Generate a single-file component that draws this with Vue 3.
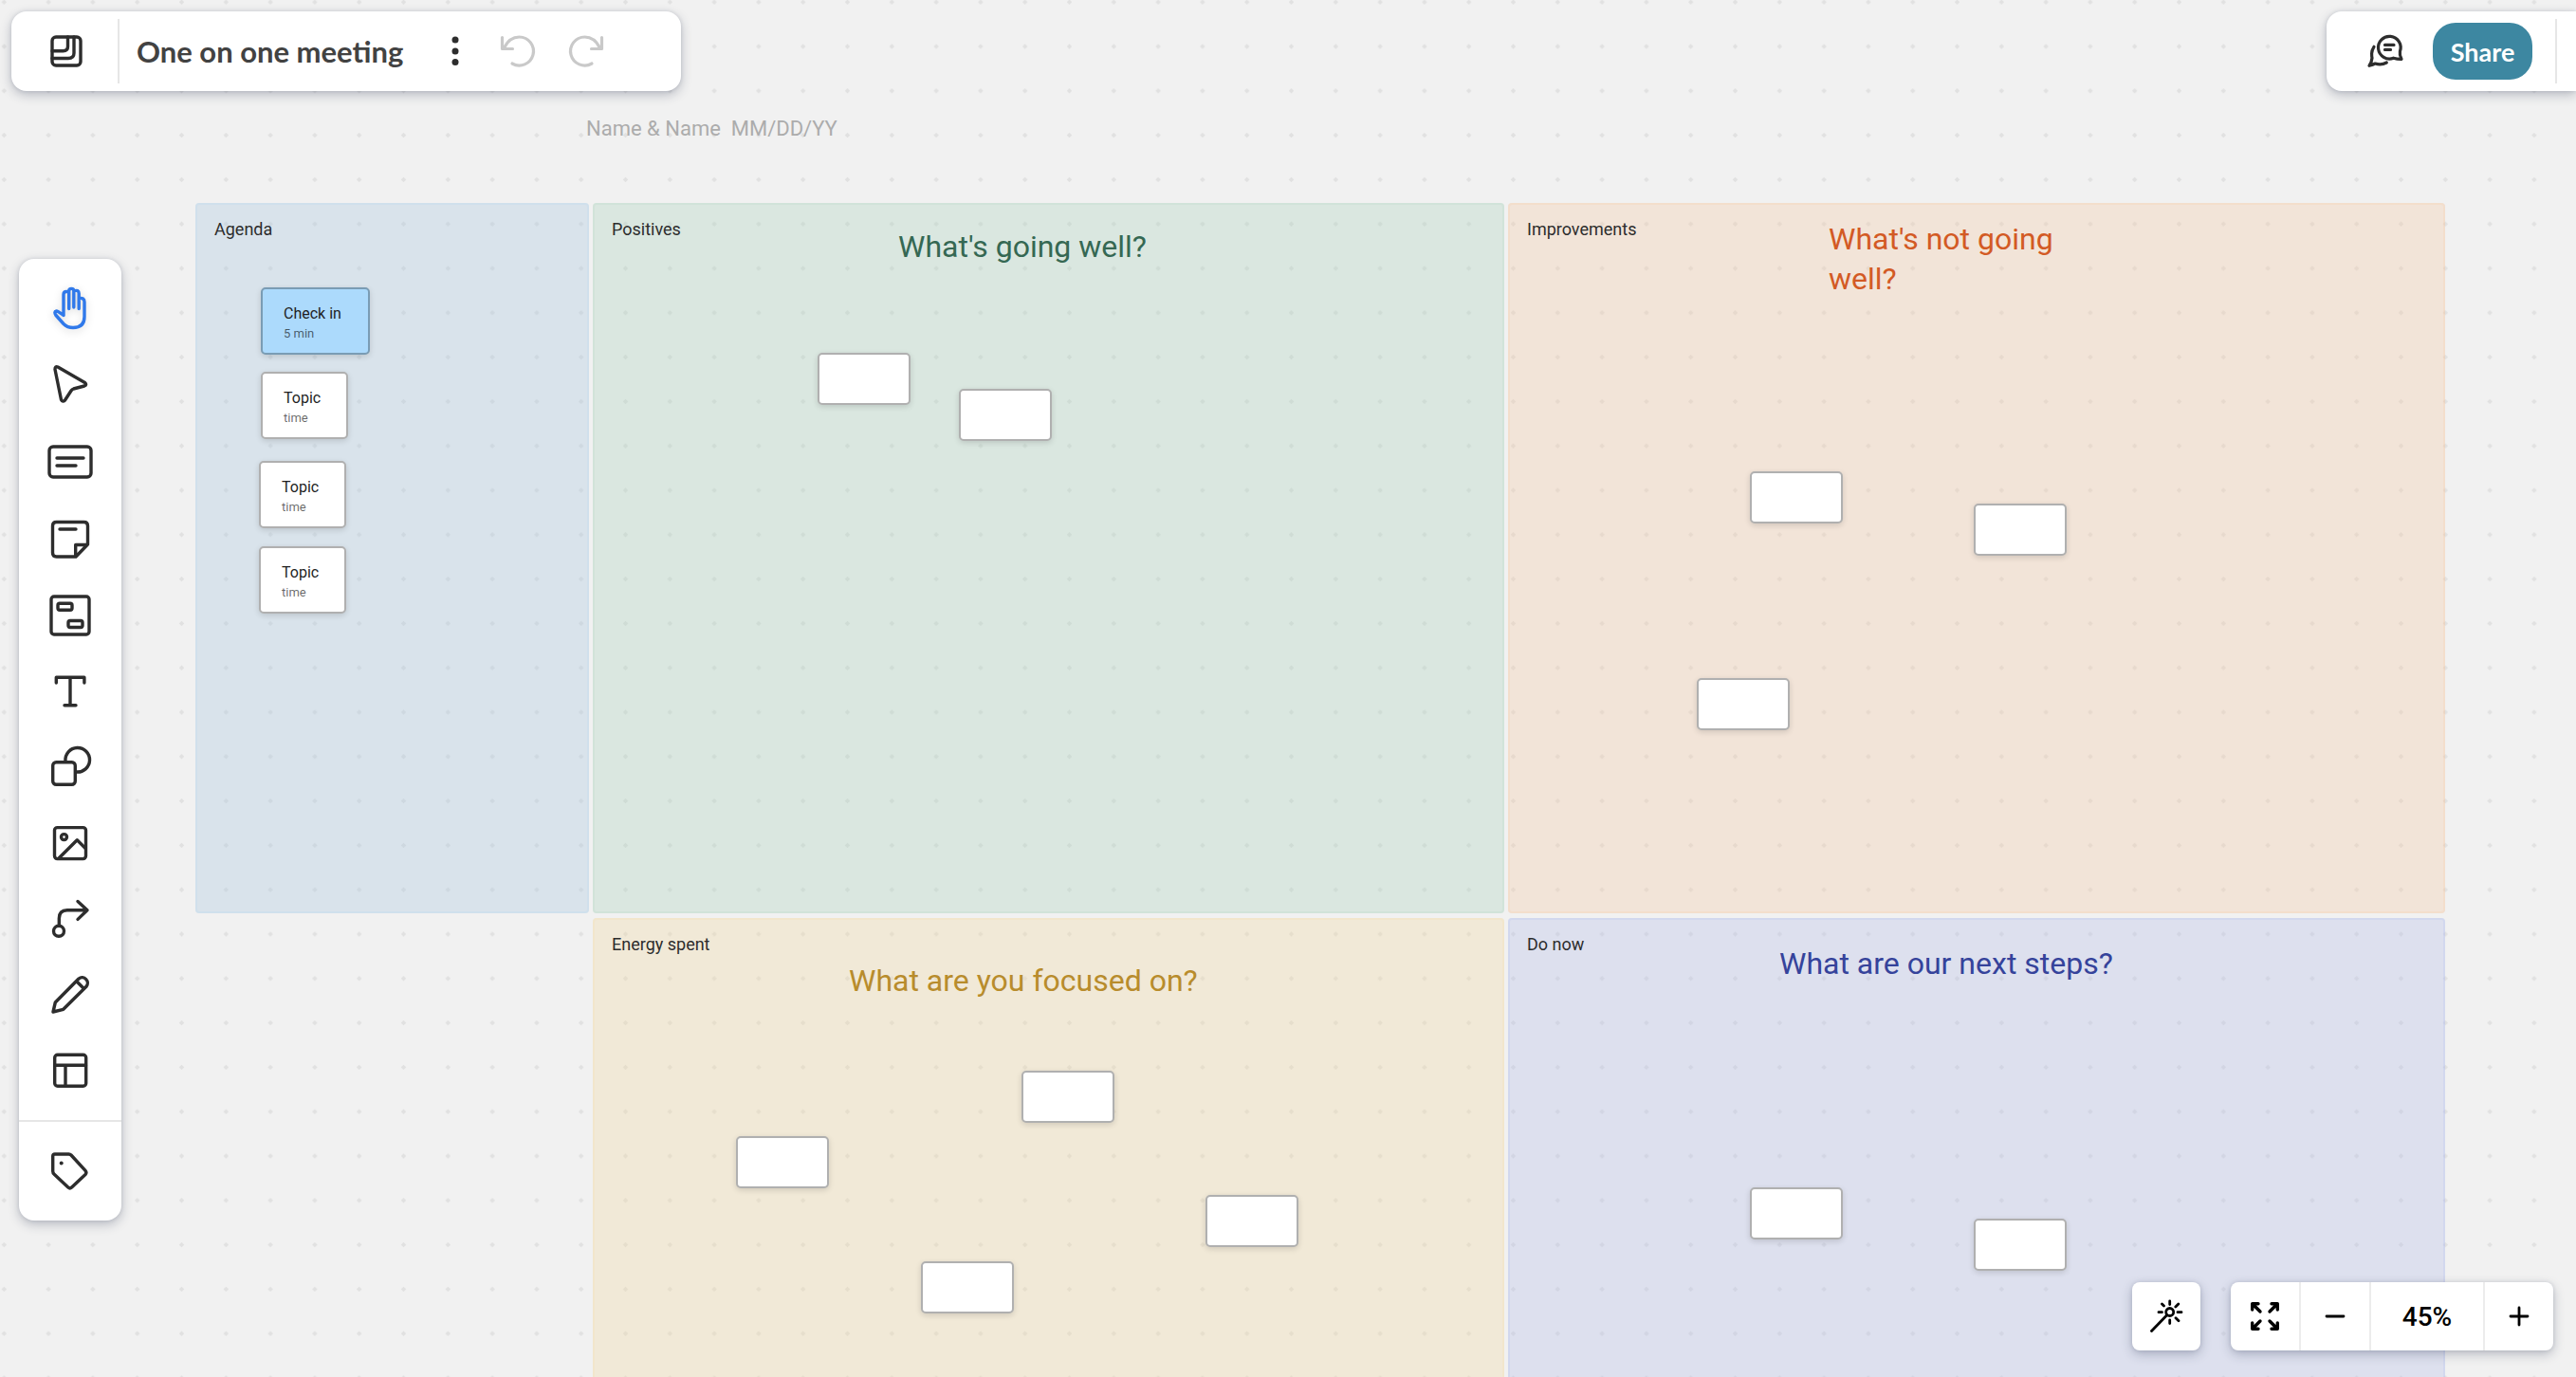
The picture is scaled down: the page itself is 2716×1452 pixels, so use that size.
<template>
  <div class="app">
    <svg class="dots" aria-hidden="true">
      <defs>
        <pattern id="grid-dots" x="-19.1" y="-21.2" width="46.8" height="46.8" patternUnits="userSpaceOnUse">
          <path d="M23.4 20.6l2.8 2.8-2.8 2.8-2.8-2.8z" fill="#e1e1e1" />
        </pattern>
      </defs>
      <rect width="100%" height="100%" fill="url(#grid-dots)" />
    </svg>

    <header class="top-bar">
      <div class="card title-card">
        <button class="icon-button logo" aria-label="Home">
          <svg width="34" height="34" viewBox="0 0 34 34" stroke-width="3.4">
            <rect x="2" y="2" width="30" height="30" rx="4" />
            <path d="M18.5 2v10q0 4.7-5 4.7H2M25 2v17q0 5.5-6 5.5H2" />
          </svg>
        </button>
        <span class="divider"></span>
        <h1>One on one meeting</h1>
        <button class="icon-button more" aria-label="More options">
          <svg width="8" height="32" viewBox="0 0 8 32" class="solid">
            <circle cx="4" cy="4" r="3.5" />
            <circle cx="4" cy="16" r="3.5" />
            <circle cx="4" cy="27.5" r="3.5" />
          </svg>
        </button>
        <button class="icon-button history" aria-label="Undo" disabled>
          <svg width="38" height="34" viewBox="0 0 38 34" stroke-width="3.2">
            <path d="M2.5 2.5v12h11M4.5 13.5Q10 2 20.5 2a15 15 0 1 1-7.5 28" />
          </svg>
        </button>
        <button class="icon-button history" aria-label="Redo" disabled>
          <svg width="38" height="34" viewBox="0 0 38 34" stroke-width="3.2">
            <path d="M35.5 2.5v12h-11M33.5 13.5Q28 2 17.5 2a15 15 0 1 0 7.5 28" />
          </svg>
        </button>
      </div>

      <div class="card share-card">
        <button class="icon-button chat" aria-label="Comments">
          <svg width="38" height="36" viewBox="0 0 38 36" stroke-width="3.2">
            <path d="M27.5 25.2A11.8 11.8 0 1 1 34.4 18.2Q33.7 22 36 26.3 31.5 26.4 27.5 25.2z" />
            <path d="M18.5 11.4h9.5M18.5 16.4h6" />
            <path d="M7 13.3Q4.6 17 4.6 20.5T5 25Q4.6 30 2 33.3 6 32.2 8.3 31q6.2 2.2 12-1" />
          </svg>
        </button>
        <button class="share">Share</button>
        <span class="divider"></span>
      </div>
    </header>

    <div class="workspace">
      <nav class="card tools" aria-label="Tools">
        <button
          v-for="tool in tools"
          :key="tool.name"
          class="icon-button tool"
          :class="{ active: tool.name === activeTool }"
          :aria-label="tool.name"
          @click="activeTool = tool.name"
        >
          <svg width="48" height="48" viewBox="0 0 48 48" stroke-width="3.4" v-html="tool.icon"></svg>
        </button>
        <div class="tag-row">
          <button class="icon-button tool" aria-label="Tags">
            <svg width="48" height="48" viewBox="0 0 48 48" stroke-width="3.4">
              <path d="M5.7 8v16q0 2 1.5 3.3L21.8 41q1.9 1.8 3.8 0L40 27.6q1.8-2 0-4.2L25 7q-1-1-2.5-1H7.7q-2 0-2 2z" />
              <circle cx="14.7" cy="15.6" r="2" class="dot" />
            </svg>
          </button>
        </div>
      </nav>

      <main class="board">
        <p class="board-caption">Name &amp; Name&nbsp; MM/DD/YY</p>
        <div class="areas">
          <section v-for="area in areas" :key="area.label" class="area" :class="area.theme">
            <p class="area-label">{{ area.label }}</p>
            <h2 v-if="area.heading" :style="place(area.headingAt)">
              <span v-for="line in area.heading" :key="line">{{ line }}</span>
            </h2>
            <div
              v-for="(note, i) in area.notes"
              :key="i"
              class="note"
              :class="{ topic: note.title, highlight: note.highlight }"
              :style="place(note.at)"
            >
              <template v-if="note.title">
                <span class="note-title">{{ note.title }}</span>
                <span class="note-time">{{ note.time }}</span>
              </template>
            </div>
          </section>
        </div>
      </main>
    </div>

    <footer class="controls">
      <div class="card control-group">
        <button class="icon-button" aria-label="Effects">
          <svg width="40" height="40" viewBox="0 0 40 40" stroke-width="2.8">
            <circle cx="23.7" cy="15.5" r="4" />
            <path d="M20.7 18.7L4.5 35.500M23.7 4v3.5M23.7 24v3.5M12 15.7h3.5M32 15.7h4M15.5 7l2 2M32.8 7l-3 3M30 21.7l3 3" />
          </svg>
        </button>
      </div>
      <div class="card control-group">
        <button class="icon-button" aria-label="Fit to screen">
          <svg width="40" height="40" viewBox="0 0 40 40" stroke-width="3.4">
            <path d="M13 6.7H6.7V13M7 7l8 8M27 6.7h6.3V13M33 7l-8 8M13 33.3H6.7V27M7 33l8-8M27 33.3h6.3V27M33 33l-8-8" />
          </svg>
        </button>
        <button class="icon-button" aria-label="Zoom out" @click="zoom -= 5">
          <svg width="40" height="40" viewBox="0 0 40 40" stroke-width="2.8"><path d="M11 20h18" /></svg>
        </button>
        <button class="zoom-value">{{ zoom }}%</button>
        <button class="icon-button" aria-label="Zoom in" @click="zoom += 5">
          <svg width="40" height="40" viewBox="0 0 40 40" stroke-width="2.8"><path d="M11 20h18M20 11v18" /></svg>
        </button>
      </div>
    </footer>
  </div>
</template>

<script setup>
import { ref } from "vue";

const activeTool = ref("Hand");
const zoom = ref(45);

const tools = [
  {
    name: "Hand",
    icon: '<path d="M17 28.5V6.5q0-3 3-3t2.7 1.5v16.5M22.7 6V3q0-2.6 2.6-2.6t2.5 2.6v17M27.8 3q5.4-2 5.4 2.5v16M33.2 10.5q5.8-1 5.8 4V30Q39 41.5 27 41.5q-6 0-10-4l-8-9Q6.5 24.5 9.5 24q1.5 0 7.5 4.5"/>',
  },
  {
    name: "Select",
    icon: '<path d="M11 3l28.5 16.5q2.5 2.5-.5 3.5l-11.5 3q-1.5.5-2.5 2l-6.5 10q-2.5 2.5-4-.5L8 5.5Q8 1.8 11 3z"/>',
  },
  {
    name: "Card",
    icon: '<rect x="2" y="7" width="44" height="32" rx="4"/><path d="M10 19h28M10 27h20"/>',
  },
  {
    name: "Sticky note",
    icon: '<path d="M9.5 6.5h29q4 0 4 4V30L30 43H9.5q-4 0-4-4V10.5q0-4 4-4zM42 30.5H29.7V43M13 14h17"/>',
  },
  {
    name: "Frame",
    icon: '<rect x="4" y="5" width="40" height="40" rx="3"/><rect x="11" y="12.3" width="15" height="7" rx="2"/><rect x="22" y="30.5" width="15" height="7" rx="2"/>',
  },
  {
    name: "Text",
    icon: '<path d="M9.3 16v-5.7h29.6V16M24 10.3v29.5M18 39.8h12"/>',
  },
  {
    name: "Shapes",
    icon: '<rect x="5.7" y="19.7" width="23.6" height="23.5" rx="3.5"/><path d="M19 18.5A12.8 12.8 0 1 1 30.5 30"/>',
  },
  {
    name: "Image",
    icon: '<rect x="7.5" y="8.6" width="33" height="33" rx="3"/><circle cx="17.5" cy="18.6" r="3"/><path d="M12 41l19.3-19.3 9 9"/>',
  },
  {
    name: "Connector",
    icon: '<circle cx="12" cy="37.8" r="5.5"/><path d="M12.3 32v-7.5q0-8.8 8.5-8.8H42M32 6.5l10 9.2-10 9.7"/>',
  },
  {
    name: "Pencil",
    icon: '<path d="M6 43l2.3-10L33 8a5.8 5.8 0 0 1 8 8.3l-24.2 24zM31 11l7.5 7.5"/>',
  },
  {
    name: "Templates",
    icon: '<rect x="7.7" y="8.2" width="33" height="33" rx="3"/><path d="M8 19.3h32.5M19 19.3v22"/>',
  },
];

// note and heading positions are [left, top] inside their area
const areas = [
  {
    label: "Agenda",
    theme: "blue",
    notes: [
      { at: [69, 89], title: "Check in", time: "5 min", highlight: true },
      { at: [69, 178], title: "Topic", time: "time" },
      { at: [67, 272], title: "Topic", time: "time" },
      { at: [67, 362], title: "Topic", time: "time" },
    ],
  },
  {
    label: "Positives",
    theme: "green",
    heading: ["What's going well?"],
    headingAt: [322, 25],
    notes: [{ at: [237, 158] }, { at: [386, 196] }],
  },
  {
    label: "Improvements",
    theme: "orange",
    heading: ["What's not going", "well?"],
    headingAt: [338, 17],
    notes: [{ at: [255, 283] }, { at: [491, 317] }, { at: [199, 501] }],
  },
  {
    label: "Energy spent",
    theme: "yellow",
    heading: ["What are you focused on?"],
    headingAt: [270, 45],
    notes: [{ at: [452, 161] }, { at: [151, 230] }, { at: [646, 292] }, { at: [346, 362] }],
  },
  {
    label: "Do now",
    theme: "purple",
    heading: ["What are our next steps?"],
    headingAt: [286, 27],
    notes: [{ at: [255, 284] }, { at: [491, 317] }],
  },
];

const place = ([left, top]) => ({ left: `${left}px`, top: `${top}px` });
</script>

<style>
body {
  background: #f1f1f1;
}
</style>

<style scoped>
.app {
  position: relative;
  height: 100vh;
  overflow: hidden;
  font-family: Roboto, sans-serif;
  color: #2d2d2d;
}

.app * {
  box-sizing: border-box;
}

.dots {
  position: absolute;
  inset: 0;
  width: 100%;
  height: 100%;
}

h1,
h2,
p {
  margin: 0;
}

button {
  padding: 0;
  border: none;
  background: none;
  color: inherit;
  font: inherit;
  cursor: pointer;
}

.icon-button {
  display: flex;
  align-items: center;
  justify-content: center;
}

.icon-button svg {
  fill: none;
  stroke: currentColor;
  stroke-linecap: round;
  stroke-linejoin: round;
  overflow: visible;
}

.icon-button .solid,
.icon-button .dot {
  fill: currentColor;
  stroke: none;
}

.card {
  background: #fff;
  border-radius: 16px;
  box-shadow: 0 4px 12px rgba(35, 45, 75, 0.28), 0 0 4px rgba(35, 45, 75, 0.12);
}

.divider {
  width: 2px;
  height: 68px;
  background: #e6e6e6;
}

.top-bar {
  position: relative;
  display: flex;
  justify-content: space-between;
  padding: 12px 0 0 12px;
}

.title-card,
.share-card {
  display: flex;
  align-items: center;
  height: 84px;
}

.title-card {
  padding-right: 64px;
}

.logo {
  width: 112px;
  height: 84px;
  padding-left: 4px;
}

h1 {
  width: 324px;
  padding-left: 18px;
  font-family: Lato, sans-serif;
  font-size: 31px;
  line-height: 40px;
  font-weight: 700;
  color: #424242;
  white-space: nowrap;
}

.more {
  width: 60px;
  height: 60px;
}

.history {
  width: 72px;
  height: 60px;
  color: #c9c9c9;
}

.share-card {
  padding: 0 20px;
  border-radius: 16px 0 0 16px;
}

.chat {
  width: 84px;
  height: 60px;
  margin-right: 8px;
}

.share {
  width: 105px;
  height: 60px;
  margin-right: 24px;
  border-radius: 24px;
  background: #3d87a1;
  color: #fff;
  font-family: Lato, sans-serif;
  font-size: 27px;
  font-weight: 700;
}

.workspace {
  position: relative;
  display: flex;
  align-items: flex-start;
  gap: 78px;
  padding: 0 138px 0 20px;
}

.tools {
  flex: none;
  width: 108px;
  margin-top: 177px;
  padding-top: 15px;
}

.tool {
  width: 100%;
  height: 80px;
}

.tool.active {
  color: #3079ea;
  filter: drop-shadow(0 2px 4px rgba(0, 0, 0, 0.15));
}

.tag-row {
  margin-top: 13px;
  padding: 12px 0;
  border-top: 2px solid #e6e6e6;
}

.board {
  flex: 1;
  padding-top: 25px;
}

.board-caption {
  height: 93px;
  padding-left: 412px;
  font-size: 22px;
  line-height: 30px;
  color: #acacac;
}

.areas {
  display: grid;
  grid-template-columns: 415fr 961fr 988fr;
  grid-auto-rows: 749px;
  gap: 5px 4px;
}

.area {
  position: relative;
  padding: 16px 20px;
  border-radius: 4px;
}

.area-label {
  font-size: 18px;
  line-height: 24px;
}

.blue {
  background: rgba(161, 194, 221, 0.3);
  box-shadow: inset 0 0 0 2px rgba(161, 210, 240, 0.16);
}

.green {
  background: rgba(165, 208, 185, 0.3);
  box-shadow: inset 0 0 0 2px rgba(150, 200, 175, 0.12);
}

.orange {
  background: rgba(244, 198, 160, 0.3);
  box-shadow: inset 0 0 0 2px rgba(248, 190, 140, 0.15);
}

.yellow {
  grid-column: 2;
  background: rgba(241, 215, 155, 0.3);
  box-shadow: inset 0 0 0 2px rgba(248, 215, 140, 0.15);
}

.purple {
  background: rgba(175, 185, 232, 0.3);
  box-shadow: inset 0 0 0 2px rgba(175, 185, 242, 0.22);
}

h2 {
  position: absolute;
  font-size: 32px;
  line-height: 42px;
  font-weight: 400;
  white-space: nowrap;
}

h2 span {
  display: block;
}

.green h2 {
  color: #356853;
}

.orange h2 {
  color: #d35a24;
}

.yellow h2 {
  color: #b88c2c;
}

.purple h2 {
  color: #35439b;
}

.note {
  position: absolute;
  width: 98px;
  height: 55px;
  border: 2px solid #b0b0b0;
  border-radius: 5px;
  background: #fff;
  box-shadow: 0 2px 6px rgba(0, 0, 0, 0.14);
}

.note.topic {
  display: flex;
  flex-direction: column;
  width: 92px;
  height: 71px;
  padding: 14px 22px;
}

.note.highlight {
  width: 115px;
  border-color: #7a9cb4;
  background: #acdafc;
}

.note-title {
  font-size: 16px;
  line-height: 24px;
  color: #1f1f1f;
  white-space: nowrap;
}

.note-time {
  font-size: 13px;
  line-height: 18px;
  color: rgba(0, 0, 0, 0.6);
}

.controls {
  position: absolute;
  right: 24px;
  bottom: 28px;
  display: flex;
  gap: 32px;
  color: #000;
}

.control-group {
  display: flex;
  border-radius: 8px;
}

.control-group button {
  width: 72px;
  height: 72px;
}

.control-group button + button {
  box-sizing: content-box;
  border-left: 2px solid #ececec;
}

.control-group .zoom-value {
  width: 118px;
  font-size: 28px;
  font-weight: 500;
}
</style>
